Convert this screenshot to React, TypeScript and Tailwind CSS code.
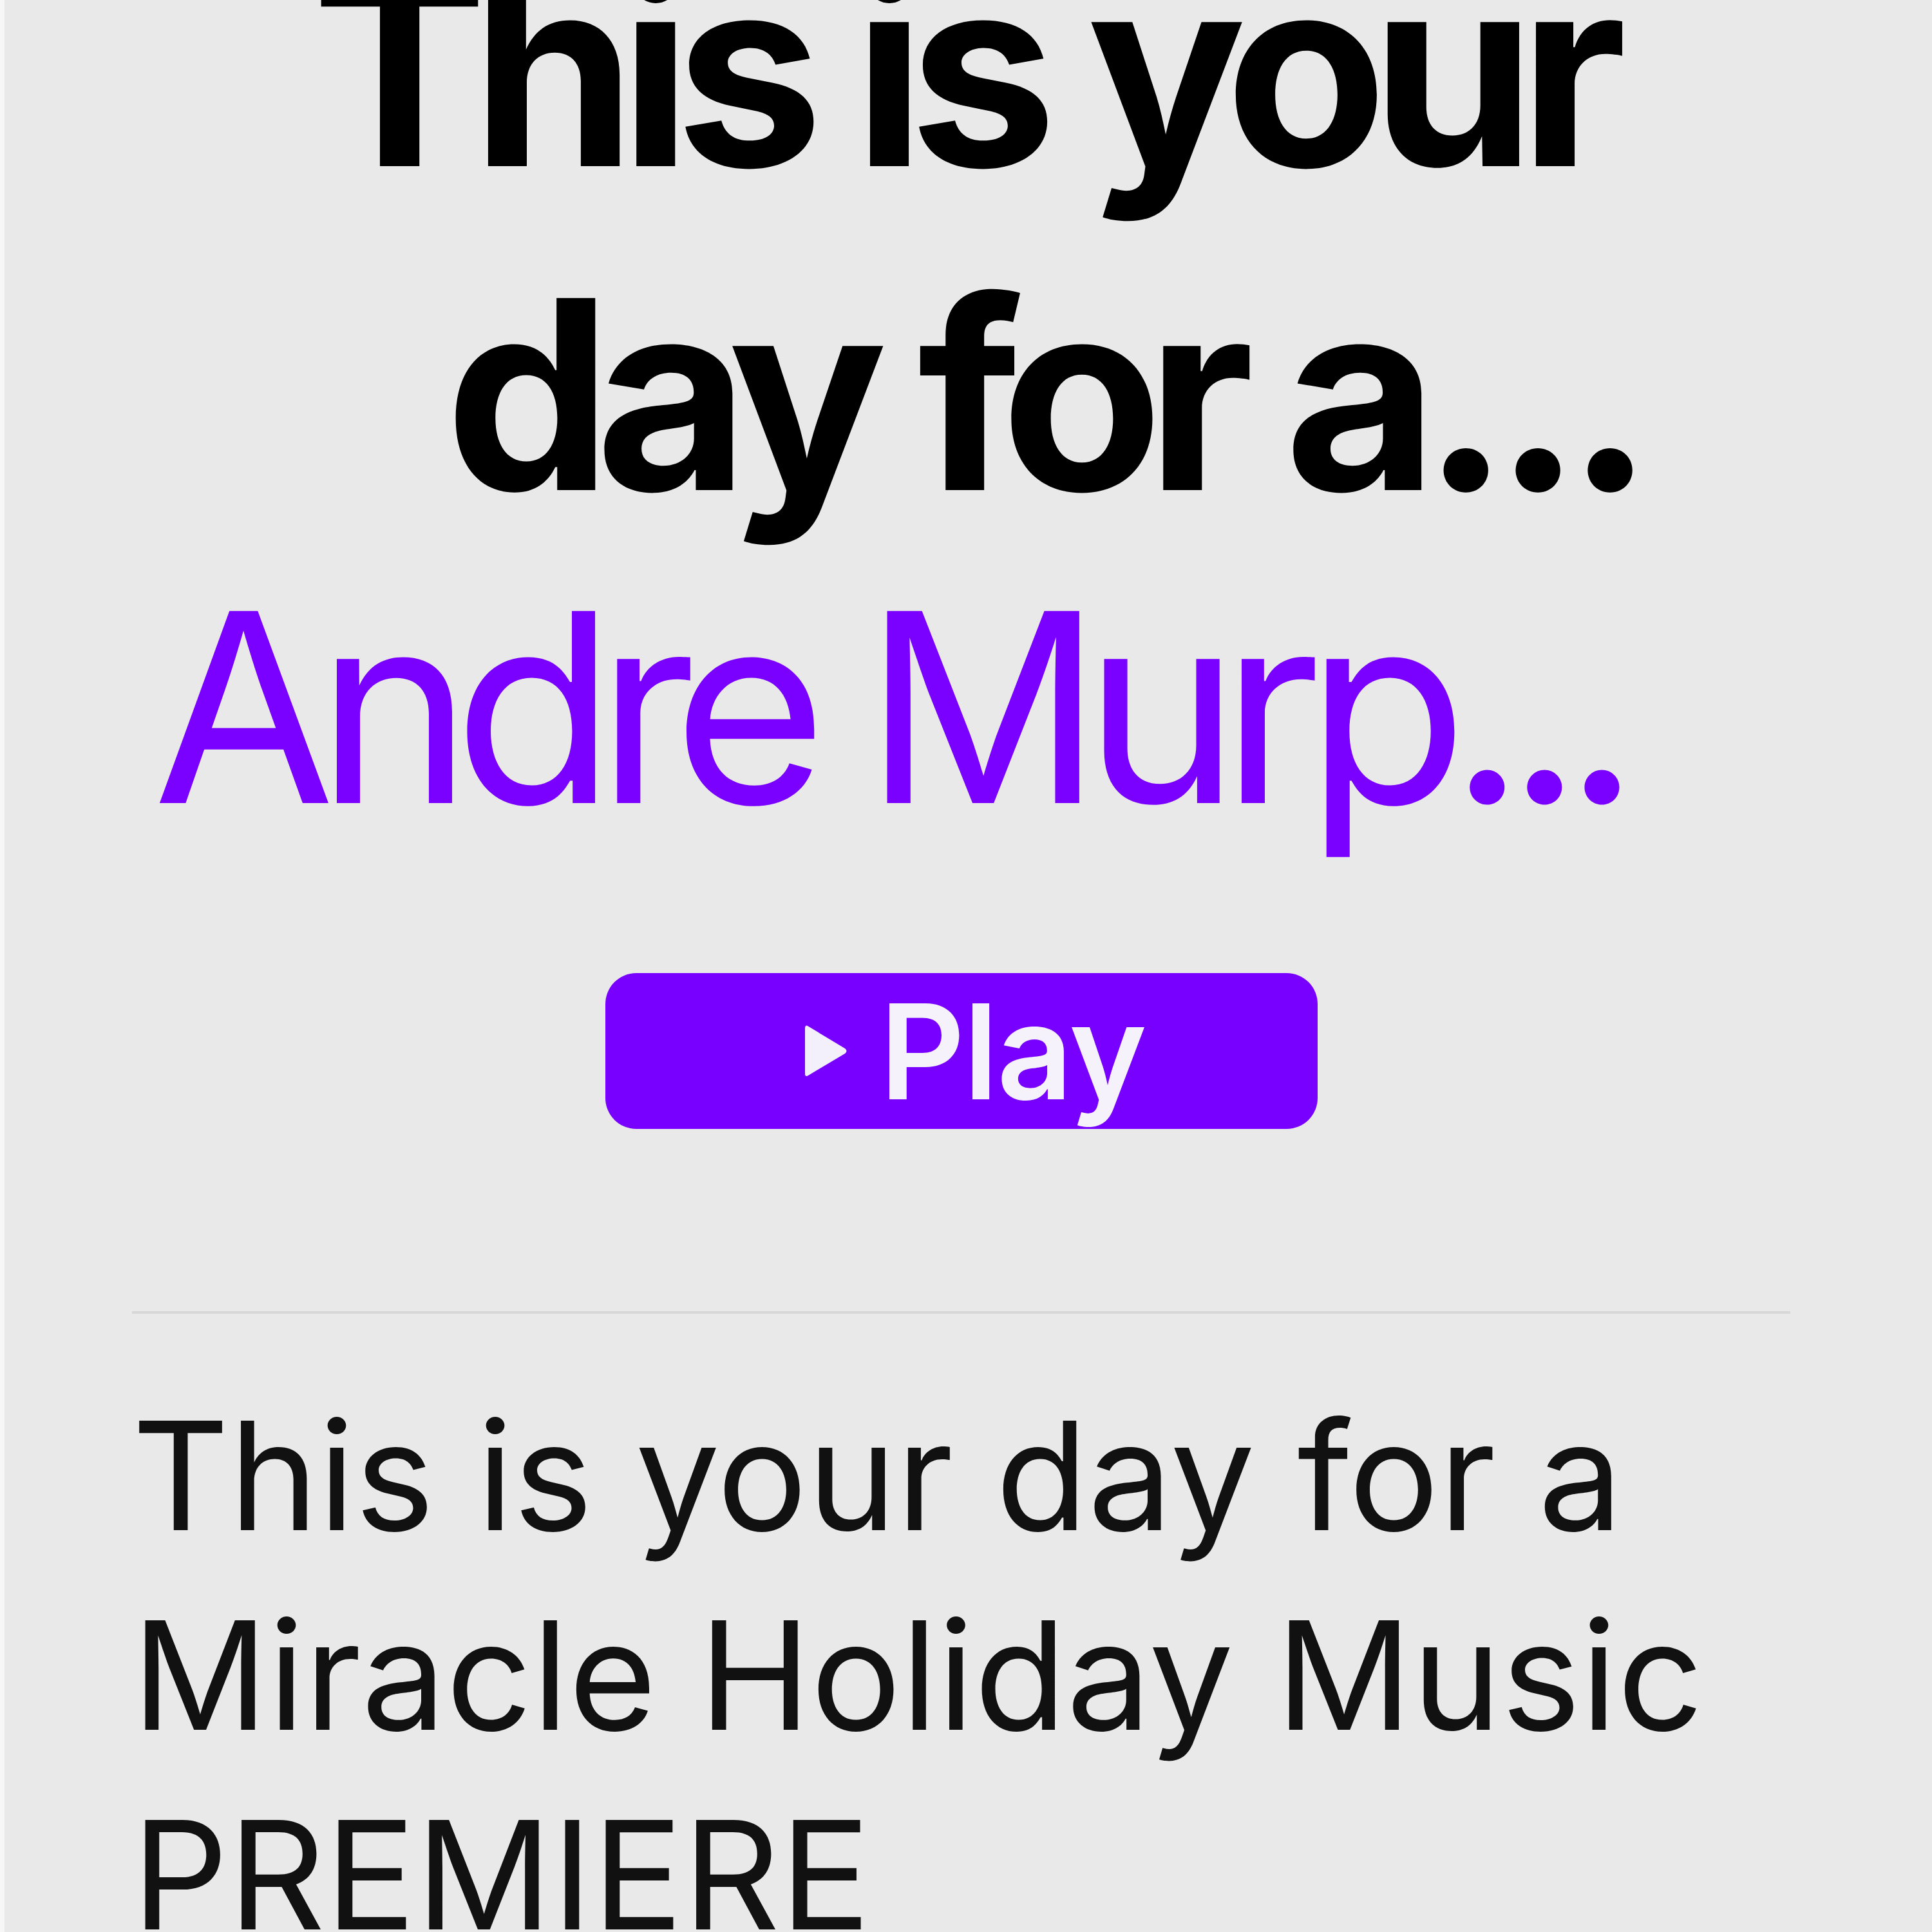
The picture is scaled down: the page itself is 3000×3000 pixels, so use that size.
import React from "react";

const font = { fontFamily: "Inter, 'Noto Sans', sans-serif" };

function PlayButton() {
  return (
    <button className="mt-[178px] flex h-[242px] w-[1106px] items-center justify-center gap-[46px] rounded-[48px] bg-[#7800ff] pl-[40px]">
      <svg width="74" height="90" viewBox="0 0 74 90" className="shrink-0">
        <path
          d="M8 6 Q4 4 4 10 L4 80 Q4 86 9 83 L66 49 Q71 45 66 41 Z"
          fill="#f4f0fb"
        />
      </svg>
      <span className="text-[205px] font-semibold leading-none tracking-[-2px] text-[#f6f2fc]">
        Play
      </span>
    </button>
  );
}

export default function App() {
  return (
    <div
      className="relative h-[3000px] w-[3000px] overflow-hidden bg-[#e9e9e9]"
      style={font}
    >
      <div className="absolute inset-y-0 left-0 w-[7px] bg-[#f7f7f7]" />
      <div className="flex flex-col pl-[205px] pr-[220px]">
        <div className="mt-[-142px] flex flex-col items-center">
          <h1 className="flex flex-col items-center text-[410px] font-bold leading-[503px] tracking-[-25px] text-black">
            <span className="whitespace-nowrap">This is your</span>
            <span className="ml-[250px] whitespace-nowrap">day for a...</span>
          </h1>
          <p className="mr-[230px] whitespace-nowrap text-[410px] font-normal leading-[469px] tracking-[-29px] text-[#7a00ff]">
            Andre Murp...
          </p>
          <PlayButton />
        </div>
        <div className="mt-[283px] h-[4px] bg-[#d7d7d7]" />
        <p className="mt-[96px] text-[234px] leading-[310px] text-[#111111]">
          This is your day for a
          <br />
          Miracle Holiday Music
          <br />
          PREMIERE
        </p>
      </div>
    </div>
  );
}
